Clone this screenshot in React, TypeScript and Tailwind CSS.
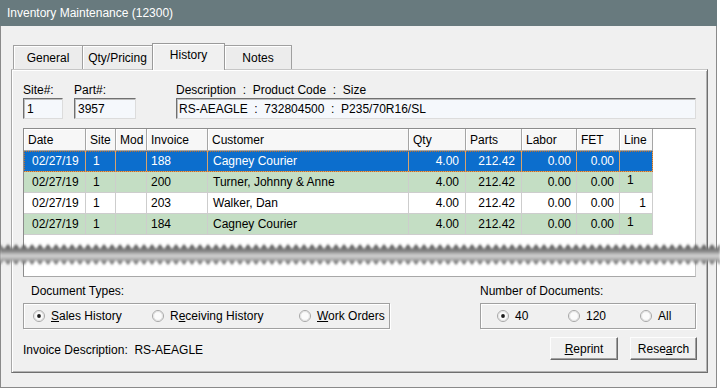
import React from "react";

const GRID_COLS = "grid grid-cols-[62px_30px_31px_61px_201px_57px_56px_55px_43px_33px]";

const HEADERS = ["Date", "Site", "Mod", "Invoice", "Customer", "Qty", "Parts", "Labor", "FET", "Line"];

type Row = { cells: string[]; bg: string; selected?: boolean; line: "left" | "right" | "none" };

const ROWS: Row[] = [
  { cells: ["02/27/19", "1", "", "188", "Cagney Courier", "4.00", "212.42", "0.00", "0.00", ""], bg: "bg-[#0c6ecd] text-white", selected: true, line: "none" },
  { cells: ["02/27/19", "1", "", "200", "Turner, Johnny & Anne", "4.00", "212.42", "0.00", "0.00", "1"], bg: "bg-[#c4dec4]", line: "left" },
  { cells: ["02/27/19", "1", "", "203", "Walker, Dan", "4.00", "212.42", "0.00", "0.00", "1"], bg: "bg-white", line: "right" },
  { cells: ["02/27/19", "1", "", "184", "Cagney Courier", "4.00", "212.42", "0.00", "0.00", "1"], bg: "bg-[#c4dec4]", line: "left" },
];

// padding for each data column
const PAD = ["pl-[8px]", "pl-[7px]", "", "pl-[4px]", "pl-[5px]", "justify-end pr-[6px]", "justify-end pr-[6px]", "justify-end pr-[5px]", "justify-end pr-[5px]", ""];

function Radio({ checked, children, className }: { checked?: boolean; children: React.ReactNode; className?: string }) {
  return (
    <div className={"flex items-center " + (className ?? "")}>
      <svg width="12" height="12" viewBox="0 0 12 12" className="shrink-0">
        <circle cx="6" cy="6" r="5.5" fill="#fbfbfb" stroke="#a6a6a6" />
        <circle cx="6" cy="6" r="4.4" fill="none" stroke="#dcdcdc" strokeWidth="0.8" />
        {checked && <circle cx="6" cy="6" r="1.9" fill="#1c1c1c" />}
      </svg>
      <span className="ml-[6px]">{children}</span>
    </div>
  );
}

function Tab({ label, active, w }: { label: string; active?: boolean; w: string }) {
  if (active) {
    return (
      <div className={`${w} relative z-10 -mb-px flex h-[27px] items-start justify-center border border-b-0 border-[#9a9a9a] bg-[#f0f0f0] pt-[4px] shadow-[inset_1px_1px_0_#fff]`}>
        {label}
      </div>
    );
  }
  return (
    <div className={`${w} flex h-[24px] items-center justify-center border border-b-0 border-[#a0a0a0] bg-[#ececec] shadow-[inset_1px_1px_0_#fff]`}>
      {label}
    </div>
  );
}

function Button({ children, w }: { children: React.ReactNode; w: string }) {
  return (
    <div className={`${w} flex h-[23px] items-center justify-center border border-t-[#fdfdfd] border-l-[#fdfdfd] border-r-[#6a6a6a] border-b-[#6a6a6a] bg-[#f0f0f0] shadow-[inset_-1px_-1px_0_#a0a0a0]`}>
      {children}
    </div>
  );
}

function Tear() {
  const W = 720;
  const P = 8;
  let d = "M0,3";
  for (let x = 0; x < W; x += P) d += ` L${x + P / 2},8 L${x + P},3`;
  d += ` L${W},24`;
  for (let x = W; x > 0; x -= P) d += ` L${x - P / 2},19 L${x - P},24`;
  d += " Z";
  return (
    <svg width="720" height="26" viewBox="0 0 720 26" className="absolute left-0 top-[241px]">
      <defs>
        <linearGradient id="tearShade" x1="0" y1="0" x2="0" y2="1">
          <stop offset="0.1" stopColor="#5c5c5c" />
          <stop offset="0.35" stopColor="#888888" />
          <stop offset="0.55" stopColor="#d2d2d2" />
          <stop offset="0.7" stopColor="#b4b4b4" />
          <stop offset="0.86" stopColor="#7e7e7e" />
          <stop offset="1" stopColor="#6a6a6a" />
        </linearGradient>
        <filter id="soft" x="-1%" y="-30%" width="102%" height="160%">
          <feGaussianBlur stdDeviation="0.8" />
        </filter>
      </defs>
      <path d={d} fill="url(#tearShade)" filter="url(#soft)" />
    </svg>
  );
}

export default function App() {
  return (
    <div className="relative h-[390px] w-[720px] bg-white font-['Liberation_Sans',Arial,sans-serif] text-[12px] leading-[14px] text-black">
      <div className="flex h-[388px] w-[717px] flex-col border-x border-b border-[#8a8a8a] bg-[#f0f0f0]">
        <div className="-mx-px flex h-[26px] items-center bg-[#687a7e] pl-[7px] text-white">
          Inventory Maintenance (12300)
        </div>

        <div className="ml-[12px] mt-[17px] flex h-[26px] items-end">
          <Tab label="General" w="w-[70px]" />
          <Tab label="Qty/Pricing" w="w-[71px] -ml-px" />
          <Tab label="History" active w="w-[73px] -ml-px" />
          <Tab label="Notes" w="w-[68px] -ml-px" />
        </div>

        <div className="ml-[10px] flex h-[304px] w-[697px] flex-col border border-t-[#c6c6c6] border-l-[#a8a8a8] border-r-[#6f6f6f] border-b-[#6f6f6f] pl-[11px] pr-[11px] pt-[13px] shadow-[inset_1px_1px_0_#fff,inset_-1px_-1px_0_#b4b4b4]">
          <div className="flex">
            <div className="w-[40px]">
              <div>Site#:</div>
              <div className="mt-px flex h-[21px] items-center border border-t-[#707070] border-l-[#707070] border-r-[#dcdcdc] border-b-[#dcdcdc] bg-[#f5f8fc] pl-[3px] shadow-[inset_1px_1px_0_#bdbdbd]">1</div>
            </div>
            <div className="ml-[11px] w-[62px]">
              <div>Part#:</div>
              <div className="mt-px flex h-[21px] items-center border border-t-[#707070] border-l-[#707070] border-r-[#dcdcdc] border-b-[#dcdcdc] bg-[#f5f8fc] pl-[3px] shadow-[inset_1px_1px_0_#bdbdbd]">3957</div>
            </div>
            <div className="ml-[40px] flex-1">
              <div className="whitespace-pre">Description  :  Product Code  :  Size</div>
              <div className="mt-px flex h-[21px] items-center whitespace-pre border border-t-[#707070] border-l-[#707070] border-r-[#dcdcdc] border-b-[#dcdcdc] bg-[#f5f8fc] pl-[2px] shadow-[inset_1px_1px_0_#bdbdbd]">RS-AEAGLE  :  732804500  :  P235/70R16/SL</div>
            </div>
          </div>

          <div className="mt-[9px] h-[149px] border border-t-[#8c8c8c] border-l-[#8c8c8c] border-r-[#c4c4c4] border-b-[#a8a8a8] bg-white">
            <div className={GRID_COLS}>
              {HEADERS.map((h) => (
                <div key={h} className="flex h-[22px] items-center border-b border-r border-[#a5a5a5] bg-[#f7f7f7] pl-[4px] shadow-[inset_1px_1px_0_#fff]">
                  {h}
                </div>
              ))}
            </div>
            {ROWS.map((r, ri) => (
              <div
                key={ri}
                className={`${GRID_COLS} w-fit ${r.bg} ${r.selected ? "outline-1 -outline-offset-1 outline-dotted outline-[#c0702a]" : ""}`}
              >
                {r.cells.map((c, ci) => {
                  let pad = PAD[ci];
                  let inner: React.ReactNode = c;
                  if (ci === 9) {
                    if (r.line === "left") {
                      pad = "pl-[7px]";
                      inner = <span className="-translate-y-[2px]">{c}</span>;
                    } else if (r.line === "right") {
                      pad = "justify-end pr-[6px]";
                    }
                  }
                  return (
                    <div
                      key={ci}
                      className={`flex h-[21px] items-center overflow-hidden whitespace-nowrap border-b border-r ${r.selected ? "border-[#d9a36a]" : "border-[#cdcdcd]"} ${pad}`}
                    >
                      {inner}
                    </div>
                  );
                })}
              </div>
            ))}
          </div>

          <div className="flex justify-between">
            <div className="flex w-[367px] flex-col">
              <div className="ml-[8px] mt-[7px] h-[14px]">Document Types:</div>
              <div className="mt-[5px] flex h-[26px] items-center border border-[#a0a0a0] pl-[9px] shadow-[inset_1px_1px_0_#fff,1px_1px_0_#fff]">
                <Radio checked className="w-[119px]"><u>S</u>ales History</Radio>
                <Radio className="w-[147px]">R<u>e</u>ceiving History</Radio>
                <Radio><u>W</u>ork Orders</Radio>
              </div>
              <div className="mt-[14px] h-[14px] whitespace-pre">Invoice Description:  RS-AEAGLE</div>
            </div>
            <div className="flex w-[216px] flex-col">
              <div className="mt-[7px] h-[14px]">Number of Documents:</div>
              <div className="mt-[5px] flex h-[26px] items-center border border-[#a0a0a0] pl-[16px] shadow-[inset_1px_1px_0_#fff,1px_1px_0_#fff]">
                <Radio checked className="w-[71px]">40</Radio>
                <Radio className="w-[72px]">120</Radio>
                <Radio>All</Radio>
              </div>
              <div className="-mr-px mt-[8px] flex justify-end gap-[12px]">
                <Button w="w-[68px]"><span><u>R</u>eprint</span></Button>
                <Button w="w-[67px]"><span>Rese<u>a</u>rch</span></Button>
              </div>
            </div>
          </div>
        </div>
      </div>
      <Tear />
    </div>
  );
}
